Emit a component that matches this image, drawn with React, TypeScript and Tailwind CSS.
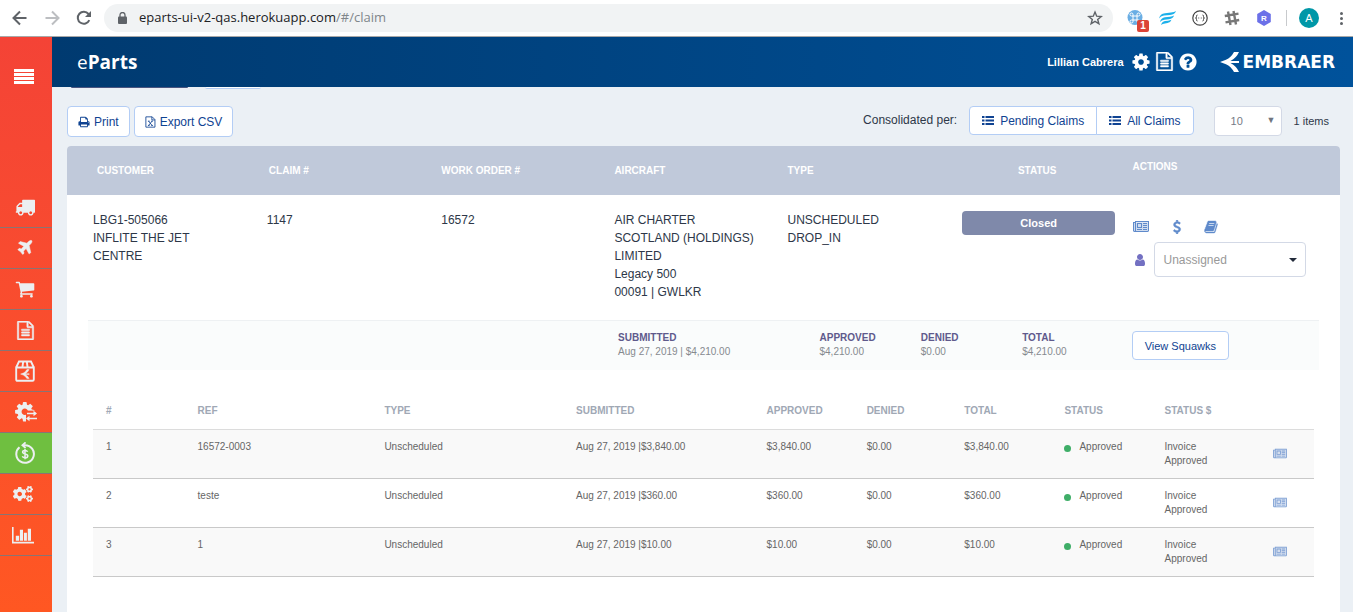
import type { ReactNode } from 'react';
import { FaCogs } from 'react-icons/fa';

type GlyphProps = { d: string; size: string; wide?: boolean; tinted?: boolean; bold?: boolean };

function Glyph({ d, size, wide, tinted, bold }: GlyphProps) {
  return (
    <svg
      viewBox={wide ? '0 0 2048 1792' : '0 0 1792 1792'}
      className={`shrink-0 ${size}`}
      fill="currentColor"
      stroke={bold ? 'currentColor' : 'none'}
      strokeWidth={bold ? 50 : 0}
      aria-hidden="true"
    >
      {tinted && <rect x="60" y="300" width="1928" height="1200" fillOpacity="0.3" />}
      <path d={d} />
    </svg>
  );
}

const TRUCK =
  'M640 1408q0-52-38-90t-90-38-90 38-38 90 38 90 90 38 90-38 38-90zm-384-512h384v-256h-158q-13 0-22 9l-195 195q-9 9-9 22v30zm1280 512q0-52-38-90t-90-38-90 38-38 90 38 90 90 38 90-38 38-90zm256-1088v1024q0 15-4 26.5t-13.5 18.5-16.5 11.5-23.5 6-22.5 2-25.5 0-22.5-.5q0 106-75 181t-181 75-181-75-75-181h-384q0 106-75 181t-181 75-181-75-75-181h-64q-3 0-22.5.5t-25.5 0-22.5-2-23.5-6-16.5-11.5-13.5-18.5-4-26.5q0-26 19-45t45-19v-320q0-8-.5-35t0-38 2.5-34.5 6.5-37 14-30.5 22.5-30l198-198q19-19 50.5-32t58.5-13h160v-192q0-26 19-45t45-19h1024q26 0 45 19t19 45z';
const PLANE =
  'M1568 160q44 52 12 148t-108 172l-161 161 160 696q5 19-12 33l-128 96q-7 6-19 6-4 0-7-1-15-3-21-14l-279-508-259 259 53 194q5 17-8 31l-96 96q-9 9-23 9h-2q-15-2-24-13l-189-252-252-189q-11-7-13-23-1-13 9-25l96-97q9-9 23-9 6 0 8 1l194 53 259-259-508-279q-14-8-17-24-2-16 9-27l128-128q14-13 30-8l665 159 160-160q76-76 172-108t148 12z';
const CART =
  'M704 1536q0 52-38 90t-90 38-90-38-38-90 38-90 90-38 90 38 38 90zm896 0q0 52-38 90t-90 38-90-38-38-90 38-90 90-38 90 38 38 90zm128-1088v512q0 24-16.5 42.5t-40.5 21.5l-1044 122q13 60 13 70 0 16-24 64h920q26 0 45 19t19 45-19 45-45 19h-1024q-26 0-45-19t-19-45q0-11 8-31.5t16-36 21.5-40 15.5-29.5l-177-823h-204q-26 0-45-19t-19-45 19-45 45-19h256q16 0 28.5 6.5t19.5 15.5 13 24.5 8 26 5.5 29.5 4.5 26h1201q26 0 45 19t19 45z';
const COG =
  'M1152 896q0-106-75-181t-181-75-181 75-75 181 75 181 181 75 181-75 75-181zm512-109v222q0 12-8 23t-20 13l-185 28q-19 54-39 91 35 50 107 138 10 12 10 25t-9 23q-27 37-99 108t-94 71q-12 0-26-9l-138-108q-44 23-91 38-16 136-29 186-7 28-36 28h-222q-14 0-24.5-8.5t-11.5-21.5l-28-184q-49-16-90-37l-141 107q-10 9-25 9-14 0-25-11-126-114-165-168-7-10-7-23 0-12 8-23 15-21 51-66.5t54-70.5q-27-50-41-99l-183-27q-13-2-21-12.5t-8-23.5v-222q0-12 8-23t19-13l186-28q14-46 39-92-40-57-107-138-10-12-10-24 0-10 9-23 26-36 98.5-107.5t94.5-71.5q13 0 26 10l138 107q44-23 91-38 16-136 29-186 7-28 36-28h222q14 0 24.5 8.5t11.5 21.5l28 184q49 16 90 37l142-107q9-9 24-9 13 0 25 10 129 119 165 170 7 8 7 22 0 12-8 23-15 21-51 66.5t-54 70.5q26 50 41 98l183 28q13 2 21 12.5t8 23.5z';
const HELP =
  'M1024 1376v-192q0-14-9-23t-23-9h-192q-14 0-23 9t-9 23v192q0 14 9 23t23 9h192q14 0 23-9t9-23zm256-672q0-88-55.5-163t-138.5-116-170-41q-243 0-371 213-15 24 8 42l132 100q7 6 19 6 16 0 25-12 53-68 86-92 34-24 86-24 48 0 85.5 26t37.5 59q0 38-20 61t-68 45q-63 28-115.5 86.5t-52.5 125.5v36q0 14 9 23t23 9h192q14 0 23-9t9-23q0-19 21.5-49.5t54.5-49.5q32-18 49-28.5t46-35 44.5-48 28-60.5 12.5-81zm384 192q0 209-103 385.5t-279.5 279.5-385.5 103-385.5-103-279.5-279.5-103-385.5 103-385.5 279.5-279.5 385.5-103 385.5 103 279.5 279.5 103 385.5z';
const FILE_TEXT =
  'M1596 380q28 28 48 76t20 88v1152q0 40-28 68t-68 28h-1344q-40 0-68-28t-28-68v-1600q0-40 28-68t68-28h896q40 0 88 20t76 48zm-444-244v376h376q-10-29-22-41l-313-313q-12-12-41-22zm384 1528v-1024h-416q-40 0-68-28t-28-68v-416h-768v1536h1280zm-1024-864q0-14 9-23t23-9h704q14 0 23 9t9 23v64q0 14-9 23t-23 9h-704q-14 0-23-9t-9-23v-64zm736 224q14 0 23 9t9 23v64q0 14-9 23t-23 9h-704q-14 0-23-9t-9-23v-64q0-14 9-23t23-9h704zm0 256q14 0 23 9t9 23v64q0 14-9 23t-23 9h-704q-14 0-23-9t-9-23v-64q0-14 9-23t23-9h704z';
const NEWSPAPER =
  'M1024 512h-384v384h384v-384zm128 640v128h-640v-128h640zm0-768v640h-640v-640h640zm640 768v128h-512v-128h512zm0-256v128h-512v-128h512zm0-256v128h-512v-128h512zm0-256v128h-512v-128h512zm-1536 960v-960h-128v960q0 26 19 45t45 19 45-19 19-45zm1664 0v-1088h-1536v1088q0 33-11 64h1483q26 0 45-19t19-45zm128-1216v1216q0 80-56 136t-136 56h-1664q-80 0-136-56t-56-136v-1088h256v-128h1792z';
const DOLLAR =
  'M1362 1185q0 153-99.5 263.5t-258.5 136.5v175q0 14-9 23t-23 9h-135q-13 0-22.5-9.5t-9.5-22.5v-175q-66-9-127.5-31t-101.5-44.5-74-48-46.5-37.5-17.5-18q-17-21-2-41l103-135q7-10 23-12 15-2 24 9l2 2q113 99 243 125 37 8 74 8 81 0 142.5-43t61.5-122q0-28-15-53t-33.5-42-58.5-37.5-66-32-80-32.5q-39-16-61.5-25t-61.5-26.5-62.5-31-56.5-35.5-53.5-42.5-43.5-49-35.5-58-21-66.5-8.5-78q0-138 98-242t255-134v-180q0-13 9.5-22.5t22.5-9.5h135q14 0 23 9t9 23v176q57 6 110.5 23t87 33.5 63.5 37.5 39 29 15 14q17 18 5 38l-81 146q-8 15-23 16-14 3-27-7-3-3-14.5-12t-39-26.5-58.5-32-74.5-26-85.5-11.5q-95 0-155 43t-60 111q0 26 8.5 48t29.5 41.5 39.5 33 56 31 60.5 27 70 27.5q53 20 81 31.5t76 35 75.5 42.5 62 50 53 63.5 31.5 76.5 13 94z';
const BOOK =
  'M1703 478q40 57 18 129l-275 906q-19 64-76.5 107.5t-122.5 43.5h-923q-77 0-148.5-53.5t-99.5-131.5q-24-67-2-127 0-4 3-27t4-37q1-8-3-21.5t-3-19.5q2-11 8-21t16.5-23.5 16.5-23.5q23-38 45-91.5t30-91.5q3-10 .5-30t-.5-28q3-11 17-28t17-23q21-36 42-92t25-90q1-9-2.5-32t.5-28q4-13 22-30.5t22-22.5q19-26 42.5-84.5t27.5-96.5q1-8-3-25.5t-2-26.5q2-8 9-18t18-23 17-21q8-12 16.5-30.5t15-35 16-36 19.5-32 26.5-23.5 36-11.5 47.5 5.5l-1 3q38-9 51-9h761q74 0 114 56t18 130l-274 906q-36 119-71.5 153.5t-128.5 34.5h-869q-27 0-38 15-11 16-1 43 24 70 144 70h923q29 0 56-15.5t35-41.5l300-987q7-22 5-57 38 15 59 43zm-1064 2q-4 13 2 22.5t20 9.5h608q13 0 25.5-9.5t16.5-22.5l21-64q4-13-2-22.5t-20-9.5h-608q-13 0-25.5 9.5t-16.5 22.5zm-83 256q-4 13 2 22.5t20 9.5h608q13 0 25.5-9.5t16.5-22.5l21-64q4-13-2-22.5t-20-9.5h-608q-13 0-25.5 9.5t-16.5 22.5z';
const USER =
  'M1536 1399q0 109-62.5 187t-150.5 78h-854q-88 0-150.5-78t-62.5-187q0-85 8.5-160.5t31.5-152 58.5-131 94-89 134.5-34.5q131 128 313 128t313-128q76 0 134.5 34.5t94 89 58.5 131 31.5 152 8.5 160.5zm-256-887q0 159-112.5 271.5t-271.5 112.5-271.5-112.5-112.5-271.5 112.5-271.5 271.5-112.5 271.5 112.5 112.5 271.5z';
const PRINT =
  'M448 1536h896v-256h-896v256zm0-640h896v-384h-160q-40 0-68-28t-28-68v-160h-640v640zm1152 64q0-26-19-45t-45-19-45 19-19 45 19 45 45 19 45-19 19-45zm128 0v416q0 13-9.5 22.5t-22.5 9.5h-224v160q0 40-28 68t-68 28h-960q-40 0-68-28t-28-68v-160h-224q-13 0-22.5-9.5t-9.5-22.5v-416q0-79 56.5-135.5t135.5-56.5h64v-544q0-40 28-68t68-28h672q40 0 88 20t76 48l152 152q28 28 48 76t20 88v256h64q79 0 135.5 56.5t56.5 135.5z';
const BIRD = 'M0 10L6 7.800Q11 5.500 14 0H19Q16.500 5.800 10.500 9H19V11H10.500Q16.500 14.200 19 20H14Q11 14.500 6 12.200Z';

function ListIcon() {
  return (
    <svg viewBox="0 0 12 11" className="h-[11px] w-3" fill="currentColor" aria-hidden="true">
      <path d="M0 1h2.500v2H0zM0 4.500h2.500v2H0zM0 8h2.500v2H0zM3.500 1H12v2H3.500zM3.500 4.500H12v2H3.500zM3.500 8H12v2H3.500z" />
    </svg>
  );
}

function ExcelIcon() {
  return (
    <svg viewBox="0 0 12 14" className="h-3 w-[11px]" fill="none" stroke="currentColor" aria-hidden="true">
      <path d="M.6 1h7.400l3.200 3.200V13H.6zM7.600 1v3.600h3.600" />
      <path d="M3.800 6l4 5M7.800 6l-4 5M3 6h2M6.800 6h2M3 11h2M6.800 11h2" />
    </svg>
  );
}

const navItems: { label: string; active?: boolean; icon: ReactNode }[] = [
  { label: 'Shipping', icon: <Glyph d={TRUCK} size="size-5" /> },
  { label: 'Flights', icon: <Glyph d={PLANE} size="size-[18px]" bold /> },
  { label: 'Cart', icon: <Glyph d={CART} size="size-5" /> },
  { label: 'Documents', icon: <Glyph d={FILE_TEXT} size="size-[19px]" bold /> },
  {
    label: 'Packages',
    icon: (
      <svg viewBox="0 0 20 22" className="h-[22px] w-5" fill="none" stroke="currentColor" aria-hidden="true">
        <path d="M1.200 7.500h17.600v12q0 1.300-1.300 1.300H2.500q-1.300 0-1.300-1.300zM1.200 7.500L4 1.500h12l2.800 6M7.400 7.500l.8-6M12.600 7.500l-.8-6" strokeWidth="1.900" />
        <path d={BIRD} transform="translate(5.600 9.600) scale(.45)" fill="currentColor" />
      </svg>
    ),
  },
  {
    label: 'Exchanges',
    icon: (
      <svg viewBox="0 0 22 20" className="ml-0.5 h-5 w-[22px]" aria-hidden="true">
        <mask id="gear-cut">
          <rect width="22" height="20" fill="#fff" />
          <path d="M11 8.600H22V20H11z" fill="#000" />
        </mask>
        <g mask="url(#gear-cut)">
          <path d={COG} transform="translate(-1.500 -1.500) scale(.0126)" fill="currentColor" />
        </g>
        <path d="M12 11.500h8.500M12.500 16.500H22" fill="none" stroke="currentColor" strokeWidth="1.500" />
        <path d="M18.500 8.700L22 11.500l-3.500 2.800zM14.500 13.700L11 16.500l3.500 2.800z" fill="currentColor" />
      </svg>
    ),
  },
  {
    label: 'Claims',
    active: true,
    icon: (
      <svg viewBox="0 0 20 22" className="h-[22px] w-5" fill="none" stroke="currentColor" aria-hidden="true">
        <path d="M4.500 5.200A8.800 8.800 0 1 0 10 3.200H8" strokeWidth="2" />
        <path d="M10.600 .4L7.400 3.200l3.200 2.800" strokeWidth="1.800" />
        <path d="M12.600 9.700q-.6-1.300-2.600-1.300-2.400 0-2.400 1.700 0 1.300 2.500 1.800 2.700.5 2.700 2 0 1.800-2.700 1.800-2.200 0-2.800-1.500M10 7v10.200" strokeWidth="1.500" />
      </svg>
    ),
  },
  { label: 'Settings', icon: <FaCogs className="mr-1 size-5" /> },
  {
    label: 'Reports',
    icon: (
      <svg viewBox="0 0 22 17" className="mr-1 h-[17px] w-[22px]" fill="currentColor" aria-hidden="true">
        <path d="M0 0h1.600v14.800H22v1.700H0zM3.800 8.800h3.300v5H3.800zM7.900 2.800h3.100v11H7.900zM11.900 5.800h3v8h-3zM15.800 1.800h3.200v12h-3.200z" />
      </svg>
    ),
  },
];

function BrowserBar() {
  return (
    <div className="flex h-[37px] shrink-0 items-center border-b border-[#a8a8a8] bg-white pr-1.5 pl-3 text-[#5f6368]">
      <button type="button" aria-label="Back">
        <svg viewBox="0 0 16 16" className="size-4" fill="none" stroke="currentColor" strokeWidth="2" aria-hidden="true">
          <path d="M14.500 8H2M8 1.500L1.500 8 8 14.500" />
        </svg>
      </button>
      <button type="button" aria-label="Forward" className="ml-4 text-[#bcbec1]">
        <svg viewBox="0 0 16 16" className="size-4" fill="none" stroke="currentColor" strokeWidth="2" aria-hidden="true">
          <path d="M1.500 8H14M8 1.500L14.500 8 8 14.500" />
        </svg>
      </button>
      <button type="button" aria-label="Reload" className="ml-4">
        <svg viewBox="0 0 16 16" className="size-4" fill="none" stroke="currentColor" strokeWidth="2" aria-hidden="true">
          <path d="M13.300 10.200A6 6 0 1 1 12.500 4L14 5.600" />
          <path d="M15 1v6H9z" fill="currentColor" stroke="none" />
        </svg>
      </button>
      <div className="ml-3 flex h-7 flex-1 items-center rounded-full bg-[#f1f3f4] pr-2.5 pl-3.5">
        <svg viewBox="0 0 9 12" className="h-3 w-[9px]" aria-hidden="true">
          <rect y="4.500" width="9" height="7.500" rx="1" fill="currentColor" />
          <path d="M2 5V3a2.500 2.500 0 0 1 5 0v2" fill="none" stroke="currentColor" strokeWidth="1.300" />
        </svg>
        <span className="ml-3 flex-1 font-['Open_Sans','Noto_Sans',sans-serif] text-[13px] text-[#202124]">
          eparts-ui-v2-qas.herokuapp.com<span className="text-[#80868b]">/#/claim</span>
        </span>
        <button type="button" aria-label="Bookmark">
          <svg viewBox="0 0 16 16" className="size-4" fill="none" stroke="currentColor" strokeWidth="1.400" aria-hidden="true">
            <path d="M8 2l1.700 4.200 4.500.3-3.500 2.900 1.200 4.400L8 11.400l-3.900 2.400 1.200-4.400L1.800 6.500l4.500-.3z" />
          </svg>
        </button>
      </div>
      <div className="ml-3.5 flex items-center gap-4">
        <span className="relative block size-4">
          <svg viewBox="0 0 16 16" className="size-4" aria-hidden="true">
            <circle cx="8" cy="7.500" r="7.500" fill="#6aaee4" />
            <path d="M6 6h4v4H6zM6 6H4.500A1.500 1.500 0 1 1 6 4.500zM10 6V4.500A1.500 1.500 0 1 1 11.500 6zM6 10v1.500A1.500 1.500 0 1 1 4.500 10zM10 10h1.500a1.500 1.500 0 1 1-1.500 1.500z" fill="none" stroke="#fff" />
          </svg>
          <span className="absolute top-2.5 left-2.5 flex h-3 w-3 items-center justify-center rounded-xs bg-[#db4437] text-[10px] leading-none font-bold text-white">
            1
          </span>
        </span>
        <svg viewBox="0 0 17 14" className="h-3.5 w-[17px]" fill="#1cb0ea" aria-hidden="true">
          <path d="M17 0q-1 3.600-6 4L5 4.600Q1.500 5 0 7.600 1 2.600 6 2.200l6-.6q3.500-.2 5-1.600z" />
          <path d="M15 4.600q-1 3.200-5 3.600l-4.500.5Q2.500 9 1 11q1-4.300 5-4.700l5-.5q2.500-.2 4-1.200z" />
          <path d="M12.500 8.800q-1 3-4 3.300l-2.500.3q-2.500.2-4 1.600 1-3.600 4-4l3-.3q2-.2 3.500-.9z" />
        </svg>
        <svg viewBox="0 0 16 16" className="size-4" fill="none" stroke="#444" strokeWidth="1.200" aria-hidden="true">
          <circle cx="8" cy="8" r="7.200" />
          <path d="M5.500 5q-1.200 0-1 1.500T3.500 8q1.200 0 1 1.500t1 1.500M10.500 5q1.200 0 1 1.500t1 1.500q-1.200 0-1 1.500t-1 1.500M6.300 8h.9M8.800 8h.9" strokeWidth="1" />
        </svg>
        <svg viewBox="0 0 16 16" className="size-4" fill="none" stroke="#777" strokeWidth="2.400" aria-hidden="true">
          <path d="M4 1.500L6.500 15M9.500 1L12 14.500M.8 6l13.700-2.400M1.500 12.400L15.200 10" />
        </svg>
        <svg viewBox="0 0 16 16" className="size-4" aria-hidden="true">
          <path d="M8 0l6.800 4v8L8 16l-6.800-4V4z" fill="#6b70e8" />
          <text x="8" y="11" fontSize="8" fontWeight="700" textAnchor="middle" fill="#fff">
            R
          </text>
        </svg>
        <span className="-ml-0.5 h-4 w-px bg-[#c8cacd]" />
        <span className="-ml-1 flex size-5 items-center justify-center rounded-full bg-[#0097a7] text-[11px] text-white">A</span>
        <button type="button" aria-label="Browser menu" className="flex w-3 flex-col items-center gap-0.5">
          <span className="size-[3px] rounded-full bg-[#5f6368]" />
          <span className="size-[3px] rounded-full bg-[#5f6368]" />
          <span className="size-[3px] rounded-full bg-[#5f6368]" />
        </button>
      </div>
    </div>
  );
}

function SideNav() {
  return (
    <nav className="flex w-[52px] shrink-0 flex-col bg-linear-to-b from-[#f44336] to-[#ff5722]">
      <button type="button" aria-label="Toggle menu" className="mt-8 mb-[103px] ml-[14px] w-5 text-white">
        <svg viewBox="0 0 20 15" className="h-[15px] w-5" fill="currentColor" aria-hidden="true">
          <path d="M0 0h20v3H0zM0 4h20v3H0zM0 8h20v3H0zM0 12h20v3H0z" />
        </svg>
      </button>
      {navItems.map((item) => (
        <a
          key={item.label}
          href="#/"
          aria-label={item.label}
          className={`flex h-[41px] items-center justify-center border-b border-[#8a7473] pr-0.5 text-[#eceff1] ${item.active ? 'bg-[#6fbf40]' : ''}`}
        >
          {item.icon}
        </a>
      ))}
    </nav>
  );
}

function AppHeader() {
  return (
    <header className="flex h-[50px] items-center bg-linear-to-r from-[#003a70] to-[#00529b] pr-[18px] pl-[25px] text-white">
      <h1 className="flex-1 font-['Open_Sans','Noto_Sans',sans-serif] text-[19px] font-bold">
        <span className="font-normal">e</span>Parts
      </h1>
      <span className="mr-[7px] text-[11px] font-bold">Lillian Cabrera</span>
      <div className="flex items-center gap-1">
        <button type="button" aria-label="Settings">
          <Glyph d={COG} size="size-5" />
        </button>
        <button type="button" aria-label="Documents" className="pb-0.5">
          <Glyph d={FILE_TEXT} size="size-[19px]" bold />
        </button>
        <button type="button" aria-label="Help">
          <Glyph d={HELP} size="size-5" />
        </button>
      </div>
      <div className="ml-[22px] flex items-center gap-1">
        <svg viewBox="0 0 19 20" className="h-5 w-[19px]" fill="currentColor" aria-hidden="true">
          <path d={BIRD} />
        </svg>
        <span className="font-['DejaVu_Sans',sans-serif] text-[17px] leading-none font-bold">EMBRAER</span>
      </div>
    </header>
  );
}

const outlineButton = 'flex items-center border border-[#b3cdf5] bg-white text-[#0f4392]';

function Toolbar() {
  return (
    <div className="mt-[17px] flex items-center">
      <button type="button" className={`${outlineButton} h-[31px] gap-1 rounded px-2.5 text-xs`}>
        <Glyph d={PRINT} size="size-3" />
        Print
      </button>
      <button type="button" className={`${outlineButton} ml-1 h-[31px] gap-1 rounded px-2.5 text-xs`}>
        <ExcelIcon />
        Export CSV
      </button>
      <div className="ml-auto flex items-start">
        <span className="mr-3 text-xs leading-[29px] text-[#2d3748]">Consolidated per:</span>
        <button type="button" className={`${outlineButton} h-[29px] gap-1.5 rounded-l px-3 text-xs`}>
          <ListIcon />
          Pending Claims
        </button>
        <button type="button" className={`${outlineButton} -ml-px h-[29px] gap-1.5 rounded-r px-3 text-xs`}>
          <ListIcon />
          All Claims
        </button>
        <span className="relative ml-5 flex items-center">
          <select aria-label="Items per page" className="h-[30px] w-[68px] appearance-none rounded border border-[#d3d9e6] bg-white pl-4 text-[11px] text-[#767b86]">
            <option>10</option>
          </select>
          <span className="pointer-events-none absolute right-1.5 text-[9px] text-[#70757f]">▼</span>
        </span>
        <span className="mr-[11px] ml-3 text-[11px] leading-[31px] text-[#2d3748]">1 items</span>
      </div>
    </div>
  );
}

const lines = [
  { n: 1, ref: '16572-0003', amount: '$3,840.00' },
  { n: 2, ref: 'teste', amount: '$360.00' },
  { n: 3, ref: '1', amount: '$10.00' },
];

function ClaimLines() {
  const head = 'pl-[13px] text-left font-bold';
  const cell = 'py-2.5 pl-[13px]';
  return (
    <table className="w-full table-fixed text-[10px] leading-[14px] text-[#666]">
      <colgroup>
        <col className="w-[7.5%]" />
        <col className="w-[15.3%]" />
        <col className="w-[15.7%]" />
        <col className="w-[15.6%]" />
        <col className="w-[8.2%]" />
        <col className="w-[8%]" />
        <col className="w-[8.2%]" />
        <col className="w-[8.2%]" />
        <col className="w-[8.2%]" />
        <col />
      </colgroup>
      <thead>
        <tr className="h-[35px] border-b border-[#dcdcdc] text-[#a0a8b5]">
          <th className={head}>#</th>
          <th className={head}>REF</th>
          <th className={head}>TYPE</th>
          <th className={head}>SUBMITTED</th>
          <th className={head}>APPROVED</th>
          <th className={head}>DENIED</th>
          <th className={head}>TOTAL</th>
          <th className={head}>STATUS</th>
          <th className={head}>STATUS $</th>
          <th aria-label="Details" />
        </tr>
      </thead>
      <tbody>
        {lines.map((line) => (
          <tr key={line.n} className="border-b border-[#c9c9c9] align-top odd:bg-[#f9f9f9]">
            <td className={cell}>{line.n}</td>
            <td className={cell}>{line.ref}</td>
            <td className={cell}>Unscheduled</td>
            <td className={cell}>Aug 27, 2019 |{line.amount}</td>
            <td className={cell}>{line.amount}</td>
            <td className={cell}>$0.00</td>
            <td className={cell}>{line.amount}</td>
            <td className={cell}>
              <span className="flex items-center gap-2">
                <span className="mt-1 size-[7px] rounded-full bg-[#3fae68]" />
                Approved
              </span>
            </td>
            <td className={cell}>
              Invoice
              <br />
              Approved
            </td>
            <td className="pt-1 pr-[27px] text-right align-middle">
              <button type="button" aria-label={`Details of line ${line.n}`} className="text-[#7d9fd3]">
                <Glyph d={NEWSPAPER} size="h-3 w-3.5" wide tinted />
              </button>
            </td>
          </tr>
        ))}
      </tbody>
    </table>
  );
}

function Total({ label, value, className }: { label: string; value: string; className: string }) {
  return (
    <div className={className}>
      <dt className="font-bold text-[#5f5a8c]">{label}</dt>
      <dd className="text-[#868a8f]">{value}</dd>
    </div>
  );
}

function ClaimsTable() {
  return (
    <table className="w-full table-fixed">
      <colgroup>
        <col className="w-[15.7%]" />
        <col className="w-[13.7%]" />
        <col className="w-[13.6%]" />
        <col className="w-[13.6%]" />
        <col className="w-[13.7%]" />
        <col className="w-[13.4%]" />
        <col />
      </colgroup>
      <thead>
        <tr className="h-[49px] text-left text-[10px] text-white">
          <th className="rounded-tl bg-[#c0c9da] pl-[30px]">CUSTOMER</th>
          <th className="bg-[#c0c9da] pl-0.5">CLAIM #</th>
          <th className="bg-[#c0c9da]">WORK ORDER #</th>
          <th className="bg-[#c0c9da]">AIRCRAFT</th>
          <th className="bg-[#c0c9da]">TYPE</th>
          <th className="bg-[#c0c9da] pr-5 text-center">STATUS</th>
          <th className="rounded-tr bg-[#c0c9da] pb-2">ACTIONS</th>
        </tr>
      </thead>
      <tbody className="text-xs leading-[18px] text-[#2d3748]">
        <tr className="h-[125px] align-top">
          <td className="pt-4 pl-[26px]">
            LBG1-505066
            <br />
            INFLITE THE JET
            <br />
            CENTRE
          </td>
          <td className="pt-4">1147</td>
          <td className="pt-4">16572</td>
          <td className="pt-4">
            AIR CHARTER
            <br />
            SCOTLAND (HOLDINGS)
            <br />
            LIMITED
            <br />
            Legacy 500
            <br />
            00091 | GWLKR
          </td>
          <td className="pt-4">
            UNSCHEDULED
            <br />
            DROP_IN
          </td>
          <td className="pt-4 pr-[17px]">
            <span className="flex h-6 items-center justify-center rounded bg-[#7f89aa] text-[11px] font-bold text-white">Closed</span>
          </td>
          <td className="pt-6">
            <div className="flex h-4 items-center text-[#5f8acb]">
              <button type="button" aria-label="Claim details">
                <Glyph d={NEWSPAPER} size="h-3.5 w-[18px]" wide tinted />
              </button>
              <button type="button" aria-label="Payment" className="ml-5">
                <Glyph d={DOLLAR} size="size-3.5" bold />
              </button>
              <button type="button" aria-label="Log book" className="ml-5">
                <Glyph d={BOOK} size="size-3.5" bold />
              </button>
            </div>
            <div className="mt-[7px] flex items-center">
              <span className="pl-px text-[#7370c2]">
                <Glyph d={USER} size="size-3.5" />
              </span>
              <span className="relative mr-[34px] ml-[7px] flex flex-1 items-center">
                <select aria-label="Assignee" className="h-[35px] w-full appearance-none rounded border border-[#d3d9e6] bg-white pl-2 text-xs text-[#999]">
                  <option>Unassigned</option>
                </select>
                <svg viewBox="0 0 8 4" className="pointer-events-none absolute right-[9px] h-1 w-2" fill="#222b3a" aria-hidden="true">
                  <path d="M0 0h8L4 4z" />
                </svg>
              </span>
            </div>
          </td>
        </tr>
        <tr className="align-top">
          <td colSpan={7} className="px-[21px]">
            <div className="flex h-[50px] items-start border-t border-[#eef1f3] bg-[#fafcfc]">
              <dl className="flex flex-1 pt-2.5 text-[10px] leading-[14px]">
                <Total label="SUBMITTED" value="Aug 27, 2019 | $4,210.00" className="ml-[42.9%] w-[16.3%]" />
                <Total label="APPROVED" value="$4,210.00" className="w-[8.2%]" />
                <Total label="DENIED" value="$0.00" className="w-[8.2%]" />
                <Total label="TOTAL" value="$4,210.00" className="w-[8.2%]" />
              </dl>
              <button type="button" className={`${outlineButton} mt-2.5 mr-[90px] -ml-48 h-[29px] rounded px-3 text-[11px]`}>
                View Squawks
              </button>
            </div>
            <div className="px-[5px] pt-6">
              <ClaimLines />
            </div>
          </td>
        </tr>
      </tbody>
    </table>
  );
}

export default function App() {
  return (
    <div className="flex min-h-screen flex-col font-['Liberation_Sans',Arial,sans-serif]">
      <BrowserBar />
      <div className="flex flex-1">
        <SideNav />
        <div className="flex min-w-0 flex-1 flex-col">
          <AppHeader />
          <main className="flex flex-1 flex-col bg-[#ebf0f5] pr-[13px] pl-[15px]">
            <div className="flex h-0.5 gap-[17px] overflow-hidden pl-1" aria-hidden="true">
              <span className="h-px w-[117px] rounded-b bg-[#4a5580]" />
              <span className="h-0.5 w-14 rounded-b border-b border-[#b3cdf5] bg-white" />
            </div>
            <Toolbar />
            <div className="mt-[9px] flex flex-1 flex-col rounded-t bg-white">
              <ClaimsTable />
            </div>
          </main>
        </div>
      </div>
    </div>
  );
}
